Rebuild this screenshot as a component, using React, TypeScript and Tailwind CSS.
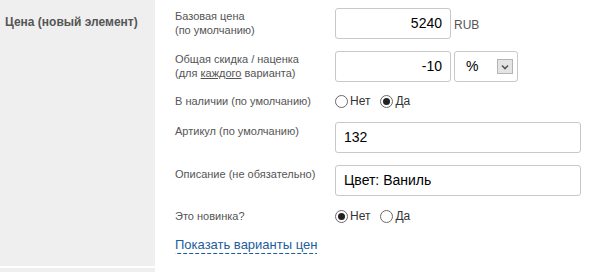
import type { JSX, ReactNode } from 'react';

const LABEL = 'text-[11px] leading-[14px] text-[#555]';
const INPUT =
  'h-[31px] rounded-[3px] border border-[#c8c8c8] bg-white px-[8px] text-[14px] text-black flex items-center';

function Radio({ checked, label }: { checked: boolean; label: string }): JSX.Element {
  return (
    <span className="flex items-center gap-[2px]">
      <span className="flex h-[13px] w-[13px] items-center justify-center rounded-full border border-[#6a6a6a] bg-white">
        {checked && <span className="h-[7px] w-[7px] rounded-full bg-[#222]" />}
      </span>
      <span className="text-[12px] text-[#333]">{label}</span>
    </span>
  );
}

function Row({ label, children, className }: { label: ReactNode; children: ReactNode; className?: string }): JSX.Element {
  return (
    <div className={`flex ${className ?? ''}`}>
      <div className="w-[160px] shrink-0">{label}</div>
      <div className="flex items-center gap-[3px]">{children}</div>
    </div>
  );
}

export default function App(): JSX.Element {
  return (
    <div className="h-[272px] w-[606px] overflow-hidden bg-white font-['Liberation_Sans',Arial,sans-serif]">
      <div className="flex h-[266px]">
        <aside className="w-[155px] shrink-0 bg-[#efefef] pl-[5px] pt-[13px]">
          <h2 className="text-[12px] font-bold text-[#555]">Цена (новый элемент)</h2>
        </aside>

        <main className="flex flex-col pl-[20px] pt-[8px]">
          <Row label={<p className={`${LABEL} pt-[1px]`}>Базовая цена<br />(по умолчанию)</p>}>
            <div className={`${INPUT} w-[116px] justify-end`}>5240</div>
            <span className="self-start pt-[8px] text-[12px] text-[#555]">RUB</span>
          </Row>

          <Row
            className="mt-[12px]"
            label={
              <p className={`${LABEL} pt-[1px]`}>
                Общая скидка / наценка
                <br />
                (для <span className="underline">каждого</span> варианта)
              </p>
            }
          >
            <div className={`${INPUT} w-[116px] justify-end`}>-10</div>
            <div className={`${INPUT} w-[64px] justify-between pl-[11px] pr-[4px]`}>
              <span>%</span>
              <span className="flex h-[15px] w-[16px] items-center justify-center border border-[#b4b4b4] bg-[#e4e4e4]">
                <svg width="8" height="6" viewBox="0 0 8 6">
                  <path d="M1 1.5 L4 4.5 L7 1.5" fill="none" stroke="#555" strokeWidth="1.6" />
                </svg>
              </span>
            </div>
          </Row>

          <div className="mt-[11px] flex h-[16px] items-center">
            <p className={`${LABEL} w-[160px]`}>В наличии (по умолчанию)</p>
            <div className="flex items-center gap-[10px]">
              <Radio checked={false} label="Нет" />
              <Radio checked label="Да" />
            </div>
          </div>

          <Row className="mt-[13px]" label={<p className={`${LABEL} pt-[2px]`}>Артикул (по умолчанию)</p>}>
            <div className={`${INPUT} w-[246px]`}>132</div>
          </Row>

          <Row className="mt-[12px]" label={<p className={`${LABEL} pt-[2px]`}>Описание (не обязательно)</p>}>
            <div className={`${INPUT} w-[246px]`}>Цвет: Ваниль</div>
          </Row>

          <div className="mt-[12px] flex h-[16px] items-center">
            <p className={`${LABEL} w-[160px]`}>Это новинка?</p>
            <div className="flex items-center gap-[10px]">
              <Radio checked label="Нет" />
              <Radio checked={false} label="Да" />
            </div>
          </div>

          <a className="mt-[13px] self-start bg-[linear-gradient(to_right,#1c5d9b_66%,transparent_0)] bg-[length:6px_1px] bg-bottom bg-repeat-x pb-[2px] text-[13px] leading-[15px] text-[#1c5d9b]">
            Показать варианты цен
          </a>
        </main>
      </div>
      <div className="mt-[2px] h-[4px] w-[155px] bg-[#efefef]" />
    </div>
  );
}
